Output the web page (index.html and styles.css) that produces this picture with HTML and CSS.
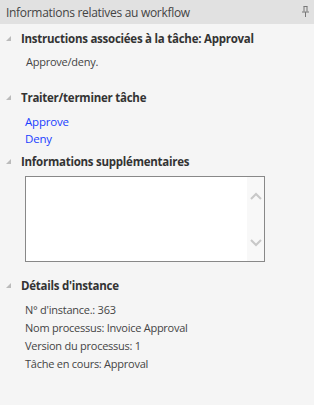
FILE: index.html
```html
<!DOCTYPE html>
<html lang="fr">
<head>
<meta charset="utf-8">
<link rel="stylesheet" href="styles.css">
</head>
<body>
<div class="pane">
  <div class="titlebar">
    <span class="title">Informations relatives au workflow</span>
    <svg class="pin" width="7" height="11" viewBox="0 0 7 11"><path d="M1.5 0.5h4M2 0.5v5M5 0.5v5M0 6h7M3.5 6v5" stroke="#777" stroke-width="1" fill="none"/></svg>
  </div>
  <div class="section">
    <div class="heading"><span class="tri"></span>Instructions associées à la tâche: Approval</div>
    <div class="body"><p class="text">Approve/deny.</p></div>
  </div>
  <div class="section">
    <div class="heading"><span class="tri"></span>Traiter/terminer tâche</div>
    <div class="body links">
      <a class="link" href="#">Approve</a>
      <a class="link" href="#">Deny</a>
    </div>
  </div>
  <div class="section">
    <div class="heading"><span class="tri"></span>Informations supplémentaires</div>
    <div class="body">
      <div class="textbox">
        <div class="area"></div>
        <div class="scroll">
          <svg width="12" height="8" viewBox="0 0 12 8"><path d="M1 7l5-5 5 5" stroke="#c8c8c8" stroke-width="2" fill="none"/></svg>
          <svg width="12" height="8" viewBox="0 0 12 8"><path d="M1 1l5 5 5-5" stroke="#c8c8c8" stroke-width="2" fill="none"/></svg>
        </div>
      </div>
    </div>
  </div>
  <div class="section">
    <div class="heading"><span class="tri"></span>Détails d'instance</div>
    <div class="body details">
      <div class="line">N° d'instance.: 363</div>
      <div class="line">Nom processus: Invoice Approval</div>
      <div class="line">Version du processus: 1</div>
      <div class="line">Tâche en cours: Approval</div>
    </div>
  </div>
</div>
</body>
</html>
```

FILE: styles.css
```css
html, body {
  margin: 0;
  padding: 0;
  background: #f5f5f5;
}
body {
  font-family: "Open Sans", "Noto Sans", sans-serif;
  color: #444;
  width: 314px;
  height: 405px;
  overflow: hidden;
}
.titlebar {
  height: 24px;
  background: #e1e1e1;
  display: flex;
  align-items: center;
  justify-content: space-between;
  padding: 0 5px 0 6px;
}
.title {
  font-size: 12px;
  letter-spacing: -0.3px;
  color: #444;
}
.pin {
  display: block;
  margin-top: -2px;
}
.section {
  padding-top: 6px;
}
.heading {
  display: flex;
  align-items: center;
  font-size: 11.5px;
  font-weight: bold;
  color: #333;
  height: 16px;
  letter-spacing: -0.25px;
}
.tri {
  width: 0;
  height: 0;
  border-left: 5px solid transparent;
  border-bottom: 5px solid #bbb;
  margin: 0 10px 0 6px;
}
.body {
  padding-left: 26px;
}
.text {
  margin: 8px 0 0;
  font-size: 11px;
  letter-spacing: -0.25px;
  line-height: 16px;
  height: 29px;
}
.links {
  display: flex;
  flex-direction: column;
  padding-left: 25px;
  padding-top: 8px;
  height: 42px;
  box-sizing: border-box;
}
.link {
  color: #1a40ff;
  text-decoration: none;
  font-size: 11.5px;
  letter-spacing: -0.2px;
  line-height: 17px;
}
.textbox {
  margin-top: 7px;
  margin-left: -1px;
  width: 238px;
  height: 84px;
  border: 1px solid #888;
  background: #fff;
  display: flex;
  margin-bottom: 9px;
}
.area {
  flex: 1;
}
.scroll {
  width: 17px;
  background: #f8f8f8;
  display: flex;
  flex-direction: column;
  align-items: center;
  justify-content: space-between;
  padding: 15px 0 14px;
}
.scroll svg {
  display: block;
}
.details {
  padding-left: 25px;
  padding-top: 8px;
}
.line {
  font-size: 11px;
  letter-spacing: -0.25px;
  line-height: 18px;
}
```
